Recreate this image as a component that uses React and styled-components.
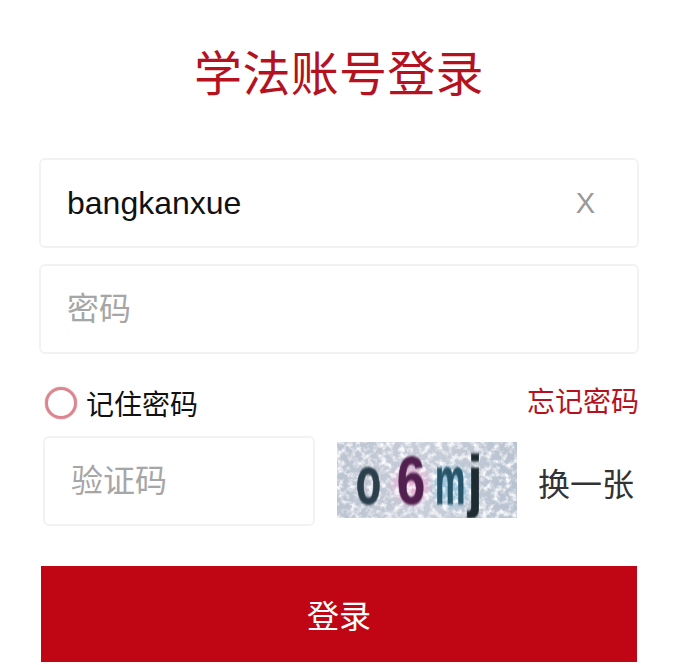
import React from 'react';
import styled, { createGlobalStyle } from 'styled-components';

const GlobalStyle = createGlobalStyle`
  html, body {
    margin: 0;
    padding: 0;
    background: #fff;
  }
  * {
    box-sizing: border-box;
  }
`;

const fontStack = `"Liberation Sans", "Noto Sans CJK SC", sans-serif`;

const Page = styled.div`
  width: 679px;
  height: 665px;
  overflow: hidden;
  padding: 40px 40px 0 39px;
  font-family: ${fontStack};
`;

const Title = styled.h1`
  margin: 0 0 48px;
  height: 70px;
  line-height: 70px;
  font-size: 48px;
  font-weight: 400;
  letter-spacing: 0.3px;
  text-align: center;
  color: #b5121f;
`;

const Field = styled.div`
  display: flex;
  align-items: center;
  height: 90px;
  padding: 0 26px;
  margin-bottom: 16px;
  border: 2px solid #f2f2f2;
  border-radius: 6px;
  background: #fff;
`;

const TextInput = styled.input`
  flex: 1;
  min-width: 0;
  padding: 0;
  border: 0;
  outline: 0;
  background: transparent;
  font-family: ${fontStack};
  font-size: 32px;
  color: #111;

  &::placeholder {
    color: #a6a6a6;
    opacity: 1;
  }
`;

const Clear = styled.span`
  font-size: 29px;
  color: #999;
  margin-right: 16px;
`;

const RememberRow = styled.div`
  display: flex;
  align-items: center;
  justify-content: space-between;
  height: 66px;
  padding-left: 6px;
`;

const Remember = styled.label`
  display: flex;
  align-items: center;
  gap: 9px;
  font-size: 28px;
  color: #111;
`;

const Radio = styled.span`
  width: 32px;
  height: 32px;
  border: 3px solid #dc858e;
  border-radius: 50%;
  box-shadow: 0 0 1px #8a3a42;
`;

const Forgot = styled.a`
  font-size: 28px;
  color: #b5121f;
  margin-top: -6px;
`;

const CaptchaRow = styled.div`
  display: flex;
  align-items: center;
  padding-left: 4px;
  margin-bottom: 40px;
`;

const CaptchaField = styled(Field)`
  width: 272px;
  margin-bottom: 0;
`;

const CaptchaImage = styled.div`
  position: relative;
  display: flex;
  align-items: center;
  width: 180px;
  height: 76px;
  margin: -2px 0 0 22px;
  padding-left: 19px;
  overflow: hidden;
  background:
    radial-gradient(circle at 74px 42px, #e6b4d6 0, #e6b4d6 10px, transparent 24px),
    radial-gradient(circle at 115px 44px, #9cc6dc 0, #9cc6dc 10px, transparent 26px),
    linear-gradient(90deg, #bcc4d1, #c8ced9 50%, #b8c2d0);
`;

const Noise = styled.svg`
  position: absolute;
  inset: 0;
  width: 100%;
  height: 100%;
`;

const CaptchaChar = styled.span`
  position: relative;
  flex: none;
  width: ${(p) => p.$w}px;
  font-size: 68px;
  font-weight: 700;
  color: ${(p) => p.$color};
  -webkit-text-stroke: 1px ${(p) => p.$color};
  transform: scaleX(${(p) => p.$sx});
  transform-origin: left center;
  filter: blur(0.9px);
`;

const Refresh = styled.a`
  margin-left: 21px;
  padding-top: 2px;
  font-size: 32px;
  white-space: nowrap;
  color: #333;
`;

const Submit = styled.button`
  display: block;
  width: 596px;
  height: 96px;
  margin-left: 2px;
  padding: 0;
  border: 0;
  background: #c00514;
  font-family: ${fontStack};
  font-size: 32px;
  color: #fff;
`;

const App = () => (
  <Page>
    <GlobalStyle />
    <Title>学法账号登录</Title>
    <Field>
      <TextInput readOnly value="bangkanxue" />
      <Clear>X</Clear>
    </Field>
    <Field>
      <TextInput readOnly placeholder="密码" />
    </Field>
    <RememberRow>
      <Remember>
        <Radio />
        记住密码
      </Remember>
      <Forgot>忘记密码</Forgot>
    </RememberRow>
    <CaptchaRow>
      <CaptchaField>
        <TextInput readOnly placeholder="验证码" />
      </CaptchaField>
      <CaptchaImage>
        <Noise>
          <filter id="captcha-noise">
            <feTurbulence type="fractalNoise" baseFrequency="0.16" numOctaves="4" seed="7" />
            <feColorMatrix values="0 0 0 0 0.96  0 0 0 0 0.96  0 0 0 0 0.98  3 0 0 0 -1.3" />
            <feGaussianBlur stdDeviation="0.6" />
          </filter>
          <rect width="100%" height="100%" filter="url(#captcha-noise)" />
        </Noise>
        <CaptchaChar $w={41} $sx={0.6} $color="#2c3f4d">o</CaptchaChar>
        <CaptchaChar $w={38} $sx={0.74} $color="#52204f">6</CaptchaChar>
        <CaptchaChar $w={33} $sx={0.5} $color="#275468">m</CaptchaChar>
        <CaptchaChar $w={12} $sx={0.75} $color="#1d2c30">j</CaptchaChar>
      </CaptchaImage>
      <Refresh>换一张</Refresh>
    </CaptchaRow>
    <Submit>登录</Submit>
  </Page>
);

export default App;
